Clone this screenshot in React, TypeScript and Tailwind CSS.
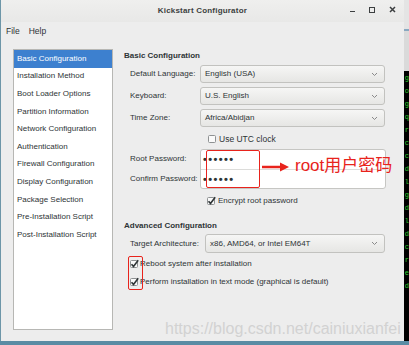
import type { ReactNode } from "react";

const sideItems = [
  "Basic Configuration",
  "Installation Method",
  "Boot Loader Options",
  "Partition Information",
  "Network Configuration",
  "Authentication",
  "Firewall Configuration",
  "Display Configuration",
  "Package Selection",
  "Pre-Installation Script",
  "Post-Installation Script",
];

const termChars = ["g", "o", "g", "q", "r", "c", "c", "d", "l", "g", "d", "l", "d", "c", "r", "e", "d"];

function Chevron() {
  return (
    <svg width="7" height="5" viewBox="0 0 7 5" className="shrink-0">
      <path d="M1 1l2.5 2.5L6 1" fill="none" stroke="#8a8a8a" strokeWidth="1" />
    </svg>
  );
}

function Select({ value, className }: { value: string; className: string }) {
  return (
    <div
      className={`flex items-center justify-between rounded-[3px] border border-[#c2c2bf] bg-gradient-to-b from-[#f6f6f5] to-[#e6e6e4] pl-[4px] pr-[6px] ${className}`}
    >
      <span>{value}</span>
      <Chevron />
    </div>
  );
}

function Check({ checked }: { checked: boolean }) {
  return (
    <svg width="10" height="10" viewBox="0 0 10 10" className="shrink-0">
      <rect x="1.5" y="1.5" width="7" height="7" rx="1" fill="#fafafa" stroke="#8e9192" />
      {checked && (
        <path d="M2.5 5.2l2 2.2L9.2 1.2" fill="none" stroke="#2e3436" strokeWidth="1.6" />
      )}
    </svg>
  );
}

function Row({ label, children }: { label: string; children: ReactNode }) {
  return (
    <div className="flex items-center">
      <span className="w-[76px] shrink-0 pl-[6px]">{label}</span>
      {children}
    </div>
  );
}

export default function App() {
  return (
    <div
      className="relative h-[345px] w-[409px] overflow-hidden bg-[#5a8ca4] text-[8px] text-[#2e3436]"
      style={{ fontFamily: '"Liberation Sans", Arial, sans-serif' }}
    >
      <div className="flex h-[341px]">
        {/* window */}
        <div className="flex w-[404px] flex-col rounded-tr-[4px] border-l border-[#6d96a8] bg-[#ededed]">
          <div className="relative flex h-[22px] items-center justify-center bg-gradient-to-b from-[#efefee] to-[#e8e8e7]">
            <span className="text-[8px] font-bold tracking-[0.2px] text-[#3c3f40]">Kickstart Configurator</span>
            <div className="absolute right-[8px] top-[6px] flex items-center gap-[14px] text-[#3c3f40]">
              <span className="mt-[4px] block h-[1.5px] w-[5px] bg-[#3c3f40]" />
              <span className="block h-[6px] w-[6px] border-[1.5px] border-[#3c3f40]" />
              <svg width="7" height="7" viewBox="0 0 7 7">
                <path d="M1 1l5 5M6 1L1 6" stroke="#3c3f40" strokeWidth="1.5" />
              </svg>
            </div>
          </div>

          <div className="flex h-[18px] items-center gap-[9px] pl-[5px] text-[8.5px]">
            <span>File</span>
            <span>Help</span>
          </div>

          <div className="mt-[9px] flex pl-[12px]">
            {/* sidebar */}
            <div className="h-[281px] w-[100px] border border-[#b7b7b4] bg-white">
              {sideItems.map((item, i) => (
                <div
                  key={item}
                  className={`flex h-[17.6px] items-center pl-[3px] ${i === 0 ? "bg-[#3d80cf] text-white" : ""}`}
                >
                  {item}
                </div>
              ))}
            </div>

            {/* main panel */}
            <div className="ml-[11px] flex w-[268px] flex-col">
              <div className="flex h-[14px] items-center font-bold">Basic Configuration</div>
              <div className="mt-[2px] flex flex-col gap-[4px]">
                <Row label="Default Language:">
                  <Select value="English (USA)" className="h-[18px] w-[185px]" />
                </Row>
                <Row label="Keyboard:">
                  <Select value="U.S. English" className="h-[18px] w-[185px]" />
                </Row>
                <Row label="Time Zone:">
                  <Select value="Africa/Abidjan" className="h-[18px] w-[185px]" />
                </Row>
              </div>

              <div className="mt-[7px] flex h-[10px] items-center gap-[2px] pl-[83px]">
                <Check checked={false} />
                <span className="text-[8.5px]">Use UTC clock</span>
              </div>

              <div className="mt-[5px] flex">
                <div className="flex w-[76px] shrink-0 flex-col pl-[6px]">
                  <span className="flex h-[20px] items-center">Root Password:</span>
                  <span className="flex h-[20px] items-center">Confirm Password:</span>
                </div>
                <div className="flex h-[40px] w-[186px] flex-col rounded-[3px] border border-[#c6c6c3] bg-white">
                  <div className="flex h-[20px] items-center border-b border-[#dcdcda] pl-[2px] text-[11px] font-bold tracking-[1.4px]">
                    ••••••
                  </div>
                  <div className="flex flex-1 items-center pl-[2px] text-[11px] font-bold tracking-[1.4px]">••••••</div>
                </div>
              </div>

              <div className="mt-[7px] flex h-[10px] items-center gap-[2px] pl-[82px]">
                <Check checked={true} />
                <span>Encrypt root password</span>
              </div>

              <div className="mt-[13px] flex h-[14px] items-center font-bold">Advanced Configuration</div>
              <div className="mt-[1px] flex items-center">
                <span className="w-[81px] shrink-0 pl-[6px]">Target Architecture:</span>
                <Select value="x86, AMD64, or Intel EM64T" className="h-[19px] w-[180px]" />
              </div>

              <div className="mt-[6px] flex h-[10px] items-center gap-[1px] pl-[5px]">
                <Check checked={true} />
                <span>Reboot system after installation</span>
              </div>
              <div className="mt-[8px] flex h-[10px] items-center gap-[1px] pl-[5px]">
                <Check checked={true} />
                <span>Perform installation in text mode (graphical is default)</span>
              </div>
            </div>
          </div>
        </div>

        {/* desktop strip on the right */}
        <div className="flex flex-1 flex-col">
          <div className="h-[29px] bg-[#e4e4e4]" />
          <div className="h-[2px] bg-[#8aa8c0]" />
          <div className="h-[40px] bg-[#dadada]" />
          <div className="flex flex-1 flex-col gap-[6px] bg-black pt-[4px] pl-[1px] font-mono text-[7px] leading-[7px] text-[#2fcf2f]">
            {termChars.map((c, i) => (
              <span key={i}>{c}</span>
            ))}
          </div>
        </div>
      </div>

      {/* annotations */}
      <div className="absolute left-[206px] top-[150px] h-[38px] w-[54px] rounded-[2px] border-[1.5px] border-[#e8231c]" />
      <svg className="absolute left-[261px] top-[161px]" width="30" height="12" viewBox="0 0 30 12">
        <path d="M1 6h20" stroke="#e8231c" strokeWidth="2.5" />
        <path d="M19 1.5L28 6l-9 4.5z" fill="#e8231c" />
      </svg>
      <span
        className="absolute left-[295px] top-[155px] text-[17px] leading-[22px] text-[#e8231c]"
        style={{ fontFamily: '"Liberation Sans", "Noto Sans CJK SC", sans-serif' }}
      >
        root用户密码
      </span>
      <div className="absolute left-[128px] top-[256px] h-[34px] w-[15px] rounded-[2px] border-[1.5px] border-[#e8231c]" />

      <span
        className="absolute left-[165px] top-[317px] text-[16px] text-[#d2d2d2]"
        style={{ fontFamily: '"Liberation Sans", Arial, sans-serif' }}
      >
        https://blog.csdn.net/cainiuxianfei
      </span>
    </div>
  );
}
